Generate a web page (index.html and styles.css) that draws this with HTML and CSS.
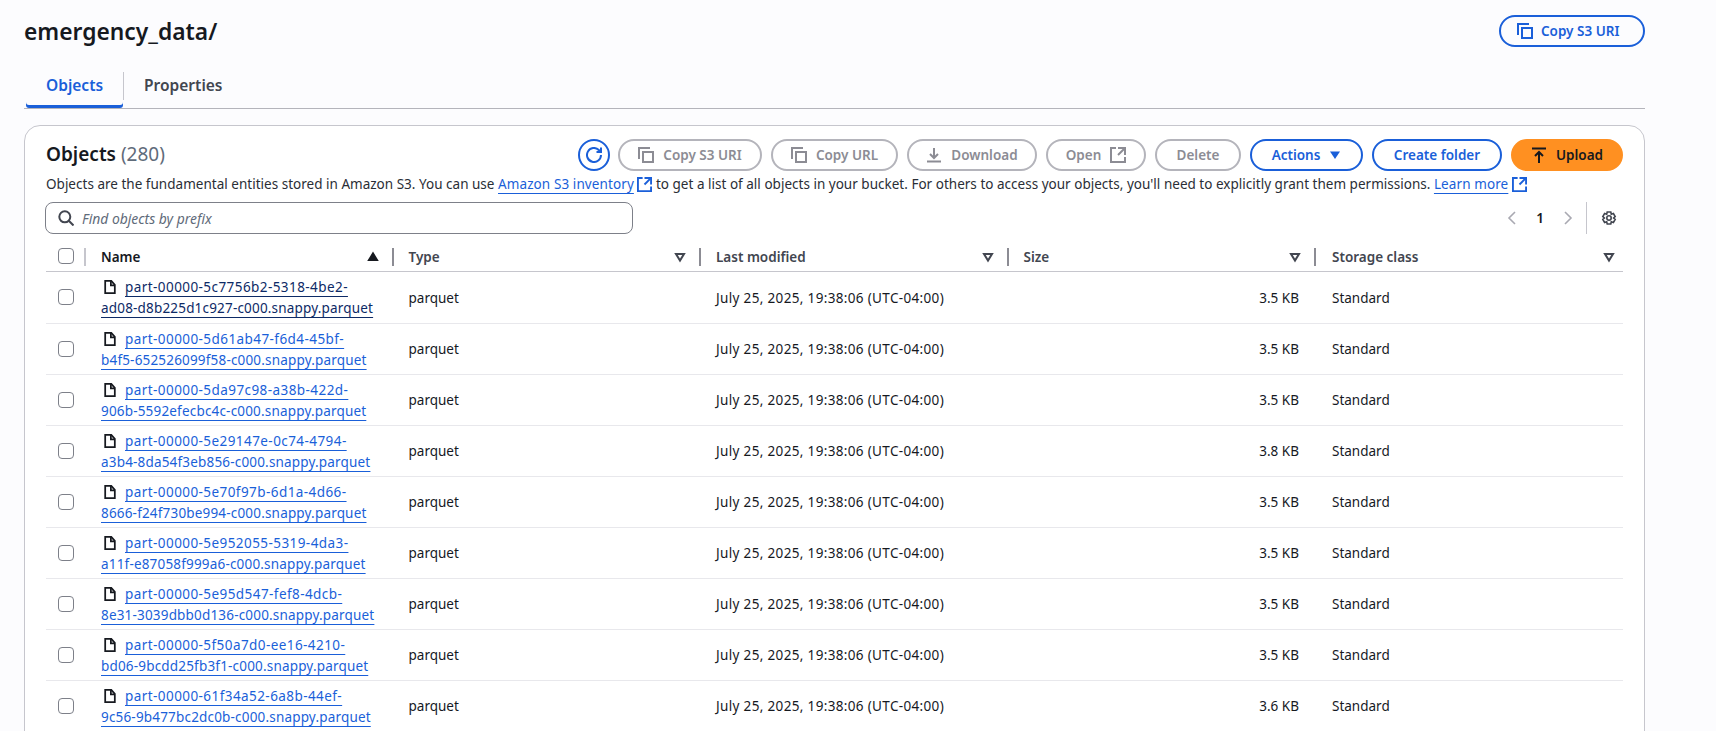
FILE: index.html
```html
<!DOCTYPE html>
<html lang="en">
<head>
    <meta charset="UTF-8">
    <meta name="viewport" content="width=device-width, initial-scale=1.0">
    <title>emergency_data/</title>
    <link rel="stylesheet" href="styles.css">
</head>

<body>
    <svg class="icon_defs" aria-hidden="true">
        <symbol id="i_copy" viewBox="0 0 16 16"><path d="M1 12V1h11"/><path d="M5 5h10v10H5z"/></symbol>
        <symbol id="i_ext" viewBox="0 0 16 16"><path d="M15 8V1H8"/><path d="M15 1 8 8"/><path d="M6 1H1v14h14v-5"/></symbol>
        <symbol id="i_down" viewBox="0 0 16 16"><path d="M8 1v10"/><path d="M4 7l4 4 4-4"/><path d="M1 14.5h14"/></symbol>
        <symbol id="i_up" viewBox="0 0 16 16"><path d="M1 1.5h14"/><path d="M8 16V5"/><path d="M4 9l4-4 4 4"/></symbol>
        <symbol id="i_refresh" viewBox="0 0 16 16"><path d="M15 8a7 7 0 1 1-2.2-5.1L15 5"/><path d="M15 0.5V5h-4.5"/></symbol>
        <symbol id="i_search" viewBox="0 0 16 16"><circle cx="6.8" cy="6.8" r="5.5"/><path d="M10.8 10.8 15.5 15.5"/></symbol>
        <symbol id="i_file" viewBox="0 0 16 16"><path d="M2.5 1h7l4 4.5V15h-11z"/><path d="M9 1v5h4.5"/></symbol>
        <symbol id="i_gear" viewBox="0 0 16 16"><path d="M6.2 1h3.6l.5 2.2 2.1-.7 1.8 3-1.6 1.5 1.6 1.5-1.8 3-2.1-.7-.5 2.2H6.2l-.5-2.2-2.1.7-1.8-3L3.4 7 1.8 5.5l1.8-3 2.1.7z" transform="translate(0 1)"/><circle cx="8" cy="8" r="2.2"/></symbol>
        <symbol id="i_sort" viewBox="0 0 12 12"><path d="M2 3h8L6 9.5z"/></symbol>
    </svg>

    <div class="page">
        <div class="page_head">
            <h1>emergency_data/</h1>
            <button class="btn btn_normal btn_head"><svg class="ic"><use href="#i_copy"/></svg>Copy S3 URI</button>
        </div>

        <div class="tabs">
            <span class="tab tab_active">Objects</span>
            <span class="tab_sep"></span>
            <span class="tab">Properties</span>
        </div>

        <div class="card">
            <div class="card_top">
                <h2>Objects <span class="count">(280)</span></h2>
                <div class="actions">
                    <button class="round_btn"><svg class="ic"><use href="#i_refresh"/></svg></button>
                    <button class="btn btn_off"><svg class="ic"><use href="#i_copy"/></svg>Copy S3 URI</button>
                    <button class="btn btn_off"><svg class="ic"><use href="#i_copy"/></svg>Copy URL</button>
                    <button class="btn btn_off"><svg class="ic"><use href="#i_down"/></svg>Download</button>
                    <button class="btn btn_off">Open<svg class="ic"><use href="#i_ext"/></svg></button>
                    <button class="btn btn_off">Delete</button>
                    <button class="btn btn_normal">Actions<svg class="caret" viewBox="0 0 12 12"><path d="M1 2.5h10L6 10z"/></svg></button>
                    <button class="btn btn_normal">Create folder</button>
                    <button class="btn btn_primary"><svg class="ic"><use href="#i_up"/></svg>Upload</button>
                </div>
            </div>

            <p class="desc">Objects are the fundamental entities stored in Amazon S3. You can use <a href="#">Amazon S3 inventory</a> <svg class="ic ic_link"><use href="#i_ext"/></svg> to get a list of all objects in your bucket. For others to access your objects, you'll need to explicitly grant them permissions. <a href="#">Learn more</a> <svg class="ic ic_link"><use href="#i_ext"/></svg></p>

            <div class="filter_row">
                <label class="search">
                    <svg class="ic"><use href="#i_search"/></svg>
                    <input type="text" placeholder="Find objects by prefix">
                </label>
                <div class="pager">
                    <svg class="chev" viewBox="0 0 10 16"><path d="M8 2 2 8l6 6"/></svg>
                    <span class="page_no">1</span>
                    <svg class="chev" viewBox="0 0 10 16"><path d="M2 2l6 6-6 6"/></svg>
                    <span class="pager_sep"></span>
                    <svg class="ic gear"><use href="#i_gear"/></svg>
                </div>
            </div>

            <table class="objects">
                <colgroup>
                    <col class="col_check"><col class="col_name"><col class="col_data"><col class="col_data"><col class="col_data"><col>
                </colgroup>
                <thead>
                    <tr>
                        <th><span class="check"></span></th>
                        <th><div class="th_in">Name<svg class="sort sort_on"><use href="#i_sort" transform="rotate(180 6 6)"/></svg></div></th>
                        <th><div class="th_in">Type<svg class="sort"><use href="#i_sort"/></svg></div></th>
                        <th><div class="th_in">Last modified<svg class="sort"><use href="#i_sort"/></svg></div></th>
                        <th><div class="th_in">Size<svg class="sort"><use href="#i_sort"/></svg></div></th>
                        <th><div class="th_in">Storage class<svg class="sort"><use href="#i_sort"/></svg></div></th>
                    </tr>
                </thead>
                <tbody>
                    <tr>
                        <td><span class="check"></span></td>
                        <td class="name"><svg class="ic file"><use href="#i_file"/></svg><a href="#" class="hover"><span class="seg">part-00000-5c7756b2-5318-4be2-</span><br>ad08-d8b225d1c927-c000.snappy.parquet</a></td>
                        <td>parquet</td><td class="date">July 25, 2025, 19:38:06 (UTC-04:00)</td><td class="size">3.5 KB</td><td>Standard</td>
                    </tr>
                    <tr>
                        <td><span class="check"></span></td>
                        <td class="name"><svg class="ic file"><use href="#i_file"/></svg><a href="#"><span class="seg">part-00000-5d61ab47-f6d4-45bf-</span><br>b4f5-652526099f58-c000.snappy.parquet</a></td>
                        <td>parquet</td><td class="date">July 25, 2025, 19:38:06 (UTC-04:00)</td><td class="size">3.5 KB</td><td>Standard</td>
                    </tr>
                    <tr>
                        <td><span class="check"></span></td>
                        <td class="name"><svg class="ic file"><use href="#i_file"/></svg><a href="#"><span class="seg">part-00000-5da97c98-a38b-422d-</span><br>906b-5592efecbc4c-c000.snappy.parquet</a></td>
                        <td>parquet</td><td class="date">July 25, 2025, 19:38:06 (UTC-04:00)</td><td class="size">3.5 KB</td><td>Standard</td>
                    </tr>
                    <tr>
                        <td><span class="check"></span></td>
                        <td class="name"><svg class="ic file"><use href="#i_file"/></svg><a href="#"><span class="seg">part-00000-5e29147e-0c74-4794-</span><br>a3b4-8da54f3eb856-c000.snappy.parquet</a></td>
                        <td>parquet</td><td class="date">July 25, 2025, 19:38:06 (UTC-04:00)</td><td class="size">3.8 KB</td><td>Standard</td>
                    </tr>
                    <tr>
                        <td><span class="check"></span></td>
                        <td class="name"><svg class="ic file"><use href="#i_file"/></svg><a href="#"><span class="seg">part-00000-5e70f97b-6d1a-4d66-</span><br>8666-f24f730be994-c000.snappy.parquet</a></td>
                        <td>parquet</td><td class="date">July 25, 2025, 19:38:06 (UTC-04:00)</td><td class="size">3.5 KB</td><td>Standard</td>
                    </tr>
                    <tr>
                        <td><span class="check"></span></td>
                        <td class="name"><svg class="ic file"><use href="#i_file"/></svg><a href="#"><span class="seg">part-00000-5e952055-5319-4da3-</span><br>a11f-e87058f999a6-c000.snappy.parquet</a></td>
                        <td>parquet</td><td class="date">July 25, 2025, 19:38:06 (UTC-04:00)</td><td class="size">3.5 KB</td><td>Standard</td>
                    </tr>
                    <tr>
                        <td><span class="check"></span></td>
                        <td class="name"><svg class="ic file"><use href="#i_file"/></svg><a href="#"><span class="seg">part-00000-5e95d547-fef8-4dcb-</span><br>8e31-3039dbb0d136-c000.snappy.parquet</a></td>
                        <td>parquet</td><td class="date">July 25, 2025, 19:38:06 (UTC-04:00)</td><td class="size">3.5 KB</td><td>Standard</td>
                    </tr>
                    <tr>
                        <td><span class="check"></span></td>
                        <td class="name"><svg class="ic file"><use href="#i_file"/></svg><a href="#"><span class="seg">part-00000-5f50a7d0-ee16-4210-</span><br>bd06-9bcdd25fb3f1-c000.snappy.parquet</a></td>
                        <td>parquet</td><td class="date">July 25, 2025, 19:38:06 (UTC-04:00)</td><td class="size">3.5 KB</td><td>Standard</td>
                    </tr>
                    <tr>
                        <td><span class="check"></span></td>
                        <td class="name"><svg class="ic file"><use href="#i_file"/></svg><a href="#"><span class="seg">part-00000-61f34a52-6a8b-44ef-</span><br>9c56-9b477bc2dc0b-c000.snappy.parquet</a></td>
                        <td>parquet</td><td class="date">July 25, 2025, 19:38:06 (UTC-04:00)</td><td class="size">3.6 KB</td><td>Standard</td>
                    </tr>
                </tbody>
            </table>
        </div>
    </div>
</body>
</html>
```

FILE: styles.css
```css
html, body{
    margin: 0;
    height: 100%;
    overflow: hidden;
}

body{
    background-color: #fcfcfe;
    color: #16191f;
    font-family: "Noto Sans", sans-serif;
    font-size: 13.5px;
    line-height: 21px;
}

.icon_defs{
    display: none;
}

.page{
    width: 1621px;
    margin-left: 24px;
}

.page_head{
    display: flex;
    justify-content: space-between;
    align-items: flex-start;
    padding-top: 15px;
    height: 57px;
}

h1{
    margin: 0;
    font-size: 22.8px;
    line-height: 34px;
    font-weight: 600;
}

/* tabs */
.tabs{
    display: flex;
    align-items: center;
    height: 36px;
    border-bottom: 1px solid #b4b4bb;
}

.tab{
    font-size: 15.5px;
    font-weight: 600;
    color: #424650;
    padding: 0 20px;
    height: 36px;
    line-height: 27px;
    box-sizing: border-box;
}

.tab_active{
    color: #1a5fd9;
    margin-left: 2px;
    box-shadow: inset 0 -3px 0 #1a5fd9;
    border-radius: 3px;
}

.tab_sep{
    width: 1px;
    height: 28px;
    background-color: #c6c6cd;
    margin-top: -8px;
}

/* card */
.card{
    background-color: #fff;
    border: 1px solid #c6c6cd;
    border-radius: 16px;
    margin-top: 16px;
    padding: 12px 21px 0 21px;
    height: 700px;
}

.card_top{
    display: flex;
    justify-content: space-between;
    align-items: center;
    height: 33px;
}

h2{
    margin: 0;
    font-size: 19px;
    font-weight: 600;
}

.count{
    font-weight: 400;
    color: #5f6b7a;
}

.actions{
    display: grid;
    grid-template-columns: 32px 144px 127px 130px 100px 86px 113px 130px 112px;
    align-items: center;
    gap: 9px;
}

.btn{
    display: flex;
    align-items: center;
    justify-content: center;
    gap: 9px;
    height: 32px;
    box-sizing: border-box;
    padding: 0;
    border-radius: 16px;
    font-family: inherit;
    font-size: 13.5px;
    font-weight: 600;
    background-color: transparent;
    white-space: nowrap;
}

.btn_head{
    width: 146px;
    justify-content: flex-start;
    gap: 8px;
    padding-left: 16px;
}

.btn_normal{
    border: 2px solid #1a5fd9;
    color: #1a5fd9;
}

.btn_off{
    border: 2px solid #b4b4bb;
    color: #8c8c94;
}

.btn_primary{
    border: 2px solid #ff9021;
    background-color: #ff9021;
    color: #16191f;
}

.round_btn{
    display: flex;
    align-items: center;
    justify-content: center;
    width: 32px;
    height: 32px;
    margin-left: 1px;
    padding: 0;
    box-sizing: border-box;
    border: 2px solid #1a5fd9;
    border-radius: 50%;
    background-color: transparent;
    color: #1a5fd9;
}

.ic{
    width: 16px;
    height: 16px;
    flex: none;
    fill: none;
    stroke: currentColor;
    stroke-width: 2;
}

.caret{
    width: 12px;
    height: 12px;
    fill: currentColor;
}

.desc{
    margin: 3px 0 0;
    color: #2a2e36;
    font-size: 13.5px;
    letter-spacing: .015px;
    white-space: nowrap;
}

a{
    color: #1a5fd9;
    text-decoration: underline;
    text-underline-offset: 4px;
    text-decoration-thickness: 1px;
}

.desc a{
    letter-spacing: .1px;
}

.ic_link{
    color: #1a5fd9;
    width: 15px;
    height: 15px;
    vertical-align: -3px;
}

/* search + pagination */
.filter_row{
    display: flex;
    justify-content: space-between;
    align-items: center;
    margin-top: 7px;
}

.search{
    display: flex;
    align-items: center;
    gap: 8px;
    width: 588px;
    height: 32px;
    margin-left: -1px;
    box-sizing: border-box;
    padding: 0 12px;
    border: 1px solid #7d8089;
    border-radius: 8px;
    color: #424650;
}

.search input{
    flex: 1;
    border: 0;
    outline: 0;
    padding: 0;
    font-family: inherit;
    font-size: 13.9px;
    font-style: italic;
    background: transparent;
}

.search input::placeholder{
    color: #5f6b7a;
}

.pager{
    display: flex;
    align-items: center;
    height: 32px;
    padding-right: 6px;
    color: #16191f;
}

.chev{
    width: 10px;
    height: 16px;
    fill: none;
    stroke: #a9a9b2;
    stroke-width: 1.6;
}

.page_no{
    width: 46px;
    text-align: center;
    font-weight: 600;
}

.pager_sep{
    width: 1px;
    height: 32px;
    background-color: #c6c6cd;
    margin-left: 13px;
    margin-right: 14px;
}

.gear{
    color: #424650;
    stroke-width: 1.6;
}

/* table */
.objects{
    width: 1577px;
    table-layout: fixed;
    border-collapse: collapse;
    margin-top: 6px;
}

.col_check{
    width: 38px;
}

.col_name, .col_data{
    width: 307.5px;
}

.objects th{
    height: 31px;
    padding: 4px 0 0;
    box-sizing: border-box;
    text-align: left;
    font-weight: 600;
    color: #424650;
    border-bottom: 1px solid #c6c6cd;
}

.objects th:first-child{
    padding-top: 2px;
}

.objects th:nth-child(2) .th_in{
    color: #16191f;
    border-left-color: #c6c6cd;
}

.th_in{
    display: flex;
    align-items: center;
    justify-content: space-between;
    height: 18px;
    padding: 0 13px 0 15px;
    border-left: 2px solid #8c8c94;
}

.objects th:last-child .th_in{
    padding-left: 16px;
    padding-right: 8px;
}

.sort{
    width: 12px;
    height: 12px;
    fill: none;
    stroke: #424650;
    stroke-width: 2;
}

.sort_on{
    fill: #16191f;
    stroke: #16191f;
}

.objects td{
    height: 50px;
    padding: 0;
    border-bottom: 1px solid #e8e8ec;
    vertical-align: middle;
    color: #16191f;
}

.objects tbody tr:first-child td:first-child{
    height: 51px;
}

.objects td:nth-child(n+3){
    height: 48px;
    padding-top: 2px;
    padding-left: 17px;
}

.objects td:last-child{
    padding-left: 18px;
}

.objects td.name{
    height: 48px;
    padding: 2px 0 0 17px;
    white-space: nowrap;
    letter-spacing: .18px;
}

.objects td.size{
    padding-left: 0;
    padding-right: 15px;
    text-align: right;
}

.objects td.date{
    letter-spacing: .34px;
}

.seg{
    letter-spacing: .43px;
}

.file{
    color: #16191f;
    margin-left: 2px;
    margin-right: 8px;
    width: 14px;
    height: 14px;
    vertical-align: -2px;
}

.hover{
    color: #0d2a66;
}

.check{
    display: block;
    width: 14px;
    height: 14px;
    margin-left: 12px;
    border: 1px solid #7d8089;
    border-radius: 4px;
    background-color: #fff;
}
```
